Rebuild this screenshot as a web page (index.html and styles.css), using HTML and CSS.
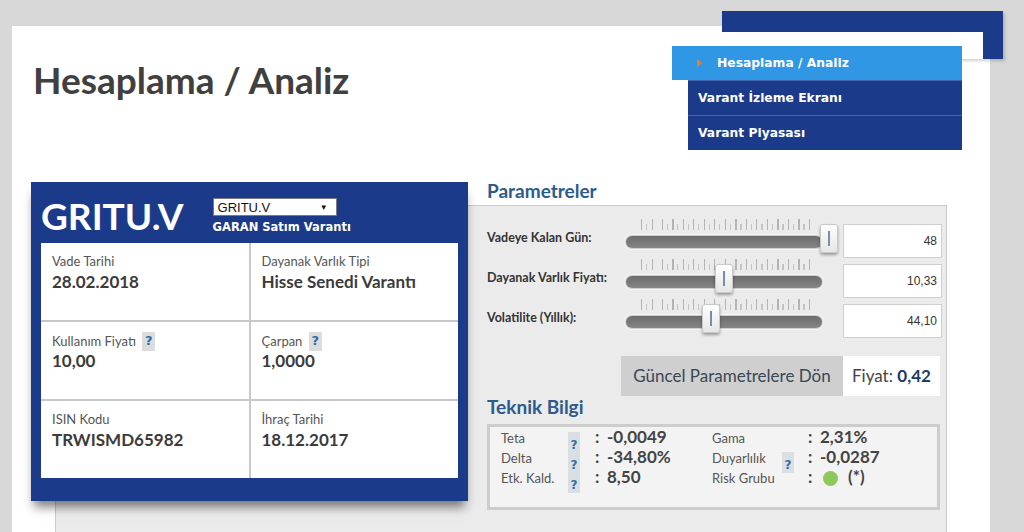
FILE: index.html
```html
<!DOCTYPE html>
<html lang="tr">
<head>
<meta charset="utf-8">
<title>Hesaplama / Analiz</title>
<link rel="stylesheet" href="styles.css">
</head>
<body>
<div class="page">
  <div class="corner"></div>
  <header class="top">
    <h1 class="title">Hesaplama / Analiz</h1>
    <nav class="menu">
      <a class="menu-item active"><span class="bullet"></span>Hesaplama / Analiz</a>
      <a class="menu-item">Varant İzleme Ekranı</a>
      <a class="menu-item">Varant Piyasası</a>
    </nav>
  </header>

  <section class="stage">
    <div class="card">
      <div class="card-head">
        <div class="code">GRITU.V</div>
        <div class="pick">
          <div class="select"><span>GRITU.V</span><span class="arrow">▼</span></div>
          <div class="sub">GARAN Satım Varantı</div>
        </div>
      </div>
      <div class="grid">
        <div class="cell"><div class="lbl">Vade Tarihi</div><div class="val">28.02.2018</div></div>
        <div class="cell"><div class="lbl">Dayanak Varlık Tipi</div><div class="val">Hisse Senedi Varantı</div></div>
        <div class="cell"><div class="lbl">Kullanım Fiyatı <span class="q">?</span></div><div class="val">10,00</div></div>
        <div class="cell"><div class="lbl">Çarpan <span class="q">?</span></div><div class="val">1,0000</div></div>
        <div class="cell"><div class="lbl">ISIN Kodu</div><div class="val">TRWISMD65982</div></div>
        <div class="cell"><div class="lbl">İhraç Tarihi</div><div class="val">18.12.2017</div></div>
      </div>
    </div>

    <div class="side">
      <h2 class="sec">Parametreler</h2>
      <div class="params">
        <div class="prow">
          <div class="plabel">Vadeye Kalan Gün:</div>
          <div class="slider">
            <div class="ticks"></div>
            <div class="track"></div>
            <div class="thumb" style="left:194px"></div>
          </div>
          <div class="pinput">48</div>
        </div>
        <div class="prow">
          <div class="plabel">Dayanak Varlık Fiyatı:</div>
          <div class="slider">
            <div class="ticks"></div>
            <div class="track"></div>
            <div class="thumb" style="left:89px"></div>
          </div>
          <div class="pinput">10,33</div>
        </div>
        <div class="prow">
          <div class="plabel">Volatilite (Yıllık):</div>
          <div class="slider">
            <div class="ticks"></div>
            <div class="track"></div>
            <div class="thumb" style="left:76px"></div>
          </div>
          <div class="pinput">44,10</div>
        </div>
        <div class="actions">
          <div class="reset">Güncel Parametrelere Dön</div>
          <div class="price">Fiyat: <b>0,42</b></div>
        </div>
      </div>

      <h2 class="sec sec2">Teknik Bilgi</h2>
      <div class="tech">
        <span class="tl">Teta</span><span class="tq">?</span><span class="tc">:</span><span class="tv">-0,0049</span>
        <span class="tl">Gama</span><span></span><span class="tc">:</span><span class="tv">2,31%</span>

        <span class="tl">Delta</span><span class="tq">?</span><span class="tc">:</span><span class="tv">-34,80%</span>
        <span class="tl">Duyarlılık</span><span class="tq">?</span><span class="tc">:</span><span class="tv">-0,0287</span>

        <span class="tl">Etk. Kald.</span><span class="tq">?</span><span class="tc">:</span><span class="tv">8,50</span>
        <span class="tl">Risk Grubu</span><span></span><span class="tc">:</span><span class="tv"><span class="dot"></span><span class="star">(*)</span></span>
      </div>
    </div>
  </section>
</div>
</body>
</html>
```

FILE: styles.css
```css
html, body {
  margin: 0;
  height: 532px;
  overflow: hidden;
}
body {
  background: #d8d8d8;
  font-family: Lato, "Open Sans", sans-serif;
  color: #444;
}

.page {
  position: relative;
  margin: 26px 0 0 12px;
  width: 978px;
  height: 506px;
  background: #fff;
}

.corner {
  position: absolute;
  left: 710px;
  top: -15px;
  width: 261px;
  height: 27px;
  border-top: 21px solid #1b3a8a;
  border-right: 20px solid #1b3a8a;
  box-shadow: 2px 2px 3px rgba(0,0,0,0.18);
}

.top {
  display: flex;
  justify-content: space-between;
  align-items: flex-start;
  height: 124px;
}
.title {
  margin: 32px 0 0 21px;
  font-family: Lato, sans-serif;
  font-weight: 700;
  font-size: 37px;
  line-height: 44px;
  color: #404040;
}

.menu {
  width: 290px;
  margin: 20px 28px 0 0;
  position: relative;
  z-index: 2;
}
.menu-item {
  display: block;
  height: 34px;
  line-height: 34px;
  margin-left: 16px;
  padding-left: 10px;
  background: #1b3a8a;
  border-top: 1px solid #4063ad;
  color: #fff;
  font-family: "DejaVu Sans", sans-serif;
  font-weight: 700;
  font-size: 12.3px;
}
.menu-item.active {
  margin-left: 0;
  padding-left: 25px;
  background: #2f97e4;
  border-top: 0;
}
.bullet {
  display: inline-block;
  width: 0;
  height: 0;
  border-left: 5px solid #f57c20;
  border-top: 4px solid transparent;
  border-bottom: 4px solid transparent;
  margin-right: 15px;
  vertical-align: 0;
}

.stage {
  margin: 55px 0 0 43px;
  width: 892px;
  height: 327px;
  box-sizing: border-box;
  background: #ebebeb;
  border: 1px solid #cbcbcb;
  border-bottom: 0;
  display: flex;
  align-items: flex-start;
}

.card {
  margin: -24px 0 0 -25px;
  width: 437px;
  height: 319px;
  box-sizing: border-box;
  padding: 0 10px 23px;
  background: #1b3a8a;
  box-shadow: 0 9px 10px -3px rgba(0,0,0,0.5);
  flex: none;
}
.card-head {
  display: flex;
  height: 61px;
  box-sizing: border-box;
  padding-top: 12px;
}
.code {
  font-weight: 700;
  font-size: 37px;
  line-height: 44px;
  color: #fff;
}
.pick {
  margin-left: 29px;
  padding-top: 4px;
}
.select {
  width: 124px;
  height: 18px;
  box-sizing: border-box;
  background: #fff;
  border: 1px solid #7a7a7a;
  display: flex;
  justify-content: space-between;
  align-items: center;
  padding: 0 8px 0 4px;
  font-family: "Liberation Sans", Arial, sans-serif;
  font-size: 13px;
  color: #111;
}
.arrow {
  font-size: 8px;
  color: #111;
}
.sub {
  margin-top: 4px;
  font-family: "DejaVu Sans", sans-serif;
  font-weight: 700;
  font-size: 11.5px;
  line-height: 14px;
  color: #fff;
}

.grid {
  display: grid;
  grid-template-columns: 1fr 1fr;
  grid-template-rows: repeat(3, 77px);
  gap: 2px;
  background: #c8c8c8;
}
.cell {
  background: #fff;
  padding: 10px 11px;
}
.lbl {
  font-size: 13px;
  line-height: 16px;
  height: 16px;
  color: #555;
}
.val {
  margin-top: 3px;
  font-weight: 700;
  font-size: 17px;
  line-height: 20px;
  color: #3b3b3b;
}
.q {
  display: inline-block;
  width: 13px;
  height: 19px;
  margin-left: 3px;
  vertical-align: 1px;
  background: #dcdcdc;
  color: #2c6ea8;
  font-family: "DejaVu Sans", sans-serif;
  font-weight: 700;
  font-size: 13px;
  line-height: 17px;
  text-align: center;
}

.side {
  margin: -24px 0 0 12px;
  width: 466px;
  box-sizing: border-box;
  padding-left: 7px;
}
.sec {
  margin: 0;
  height: 24px;
  box-sizing: border-box;
  padding-bottom: 6px;
  font-weight: 700;
  font-size: 19px;
  line-height: 18px;
  color: #2c5b8c;
}
.sec2 {
  margin-top: 2px;
}

.params {
  padding-top: 12px;
}
.prow {
  display: flex;
  height: 40px;
}
.plabel {
  width: 139px;
  padding-top: 12px;
  line-height: 16px;
  font-weight: 700;
  font-size: 12.5px;
  color: #333;
}
.slider {
  position: relative;
  width: 212px;
  height: 40px;
}
.ticks {
  margin: 1px 0 0 15px;
  width: 169px;
  height: 11px;
  background:
    repeating-linear-gradient(90deg, #b4b4b4 0 1px, transparent 1px 10.5px) left top / 100% 11px no-repeat,
    repeating-linear-gradient(90deg, transparent 0 5px, #c4c4c4 5px 6px, transparent 6px 10.5px) left bottom / 100% 6px no-repeat;
}
.track {
  margin-top: 6px;
  width: 196px;
  height: 12px;
  border-radius: 6px;
  background: linear-gradient(#6c6c6c, #858585);
  box-shadow: 0 0 0 1px #cfcfcf, 0 0 0 2px #f6f6f6;
}
.thumb {
  position: absolute;
  top: 6px;
  width: 18px;
  height: 29px;
  box-sizing: border-box;
  border: 1px solid #c9c9c9;
  border-radius: 3px;
  background: linear-gradient(#ffffff, #e6e6e6);
  box-shadow: 0 2px 3px rgba(0,0,0,0.35);
}
.thumb::after {
  content: "";
  position: absolute;
  left: 7px;
  top: 6px;
  width: 2px;
  height: 15px;
  background: #6f8fb3;
}
.pinput {
  margin: 6px 0 0 5px;
  width: 99px;
  height: 34px;
  box-sizing: border-box;
  background: #fff;
  border: 1px solid #cfcfcf;
  padding-right: 4px;
  text-align: right;
  font-family: "Liberation Sans", Arial, sans-serif;
  font-size: 12px;
  line-height: 32px;
  color: #333;
}

.actions {
  display: flex;
  justify-content: flex-end;
  margin: 18px 6px 0 0;
  height: 40px;
}
.reset {
  width: 222px;
  background: #cfcfcf;
  text-align: center;
  font-size: 17px;
  line-height: 40px;
  color: #3a4756;
}
.price {
  width: 97px;
  box-sizing: border-box;
  padding-left: 9px;
  background: #fff;
  font-size: 17px;
  line-height: 40px;
  color: #444;
  white-space: nowrap;
}
.price b {
  color: #1f3b66;
}

.tech {
  margin: 2px 6px 0 0;
  height: 86px;
  box-sizing: border-box;
  border: 3px solid #cdcdcd;
  background: #f3f3f3;
  padding-left: 11px;
  display: grid;
  grid-template-columns: 67px 27px 12px 105px 70px 26px 12px auto;
  grid-auto-rows: 20px;
  align-items: baseline;
}
.tl {
  font-size: 13px;
  line-height: 20px;
  color: #555;
}
.tq {
  align-self: start;
  margin-top: 5px;
  width: 12px;
  height: 21px;
  box-sizing: border-box;
  padding-top: 6px;
  background: #dadfe4;
  color: #2f6fa8;
  font-family: "DejaVu Sans", sans-serif;
  font-weight: 700;
  font-size: 12px;
  line-height: 14px;
  text-align: center;
}
.tc, .tv {
  font-weight: 700;
  font-size: 17px;
  line-height: 20px;
  color: #444;
}
.dot {
  display: inline-block;
  width: 15px;
  height: 15px;
  border-radius: 50%;
  background: #8dc85b;
  margin-left: 3px;
  vertical-align: -3px;
}
.star {
  margin-left: 10px;
}
```
